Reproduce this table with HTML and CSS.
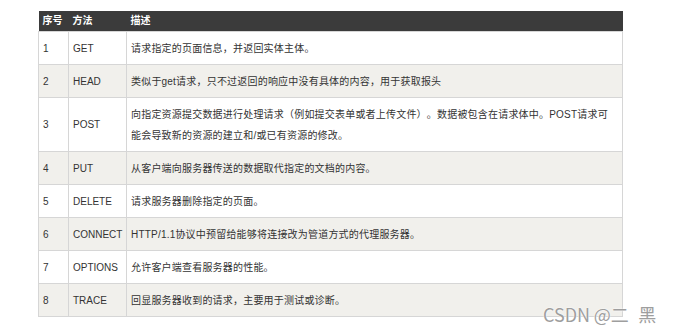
FILE: index.html
```html
<!DOCTYPE html>
<html lang="zh">
<head>
<meta charset="utf-8">
<link rel="stylesheet" href="styles.css">
</head>
<body>
<div class="page">
  <table class="methods">
    <colgroup>
      <col class="c-no">
      <col class="c-method">
      <col class="c-desc">
    </colgroup>
    <thead>
      <tr><th>序号</th><th>方法</th><th>描述</th></tr>
    </thead>
    <tbody>
      <tr><td>1</td><td>GET</td><td class="desc">请求指定的页面信息，并返回实体主体。</td></tr>
      <tr><td>2</td><td>HEAD</td><td class="desc">类似于get请求，只不过返回的响应中没有具体的内容，用于获取报头</td></tr>
      <tr><td>3</td><td>POST</td><td class="desc">向指定资源提交数据进行处理请求（例如提交表单或者上传文件）。数据被包含在请求体中。POST请求可能会导致新的资源的建立和/或已有资源的修改。</td></tr>
      <tr><td>4</td><td>PUT</td><td class="desc">从客户端向服务器传送的数据取代指定的文档的内容。</td></tr>
      <tr><td>5</td><td>DELETE</td><td class="desc">请求服务器删除指定的页面。</td></tr>
      <tr><td>6</td><td>CONNECT</td><td class="desc">HTTP/1.1协议中预留给能够将连接改为管道方式的代理服务器。</td></tr>
      <tr><td>7</td><td>OPTIONS</td><td class="desc">允许客户端查看服务器的性能。</td></tr>
      <tr><td>8</td><td>TRACE</td><td class="desc">回显服务器收到的请求，主要用于测试或诊断。</td></tr>
    </tbody>
  </table>
  <div class="watermark">CSDN @二 <span class="wm-last">黑</span></div>
</div>
</body>
</html>
```
FILE: styles.css
```css
html, body {
  margin: 0;
  padding: 0;
  background: #ffffff;
}

.page {
  position: relative;
  width: 675px;
  height: 333px;
  padding: 11px 0 0 38px;
  box-sizing: border-box;
  font-family: "Liberation Sans", "Noto Sans CJK SC", sans-serif;
  font-size: 10px;
  color: #333333;
}

.methods {
  width: 585px;
  border-collapse: collapse;
  table-layout: fixed;
}

.c-no { width: 30px; }
.c-method { width: 58px; }

.methods th {
  background: #3b3b3b;
  color: #ffffff;
  font-weight: bold;
  text-align: left;
  height: 20px;
  line-height: 20px;
  padding: 0 4px;
  border: 0;
}

.methods td {
  border: 1px solid #d6d6d6;
  padding: 5.5px 4px;
  line-height: 21px;
  vertical-align: middle;
  text-align: left;
}

.methods td.desc {
  letter-spacing: 0.2px;
  text-spacing-trim: space-all;
  padding-right: 8px;
}

.methods tbody tr:nth-child(even) td {
  background: #f1f0ec;
}

.watermark {
  position: absolute;
  left: 543px;
  top: 304px;
  font-family: "Noto Sans CJK SC", sans-serif;
  font-size: 18px;
  line-height: 20px;
  word-spacing: -0.5px;
  color: #9e9e9e;
  text-shadow: 0 0 2px #ffffff, 0 0 1px #ffffff;
  white-space: nowrap;
}

.wm-last {
  margin-left: 6px;
}
```
